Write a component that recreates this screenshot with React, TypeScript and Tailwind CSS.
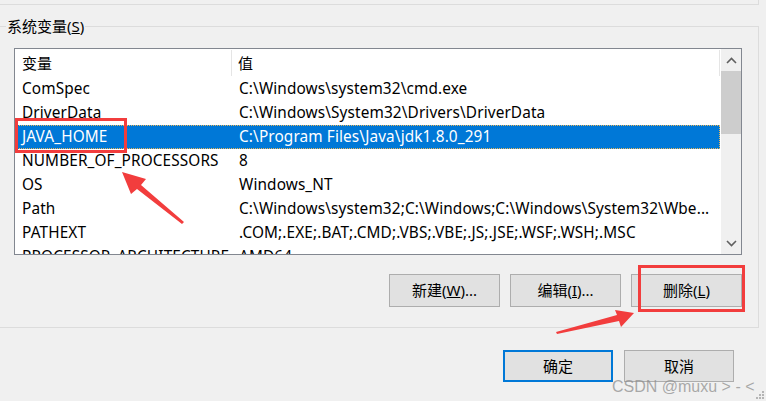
import React from "react";

const rows: [string, string][] = [
  ["ComSpec", "C:\\Windows\\system32\\cmd.exe"],
  ["DriverData", "C:\\Windows\\System32\\Drivers\\DriverData"],
  ["JAVA_HOME", "C:\\Program Files\\Java\\jdk1.8.0_291"],
  ["NUMBER_OF_PROCESSORS", "8"],
  ["OS", "Windows_NT"],
  ["Path", "C:\\Windows\\system32;C:\\Windows;C:\\Windows\\System32\\Wbe..."],
  ["PATHEXT", ".COM;.EXE;.BAT;.CMD;.VBS;.VBE;.JS;.JSE;.WSF;.WSH;.MSC"],
  ["PROCESSOR_ARCHITECTURE", "AMD64"],
];

function Btn({ children }: { children: React.ReactNode }) {
  return (
    <div className="flex items-center justify-center w-[111px] h-[33px] bg-[#e1e1e1] text-[15px] text-black border border-[#adadad]">
      {children}
    </div>
  );
}

export default function App() {
  return (
    <div
      className="relative w-[766px] h-[401px] overflow-hidden bg-[#f0f0f0] text-black"
      style={{ fontFamily: '"Noto Sans", "Noto Sans CJK SC", sans-serif' }}
    >
      {/* previous group box remnant */}
      <div className="w-[759px] h-[5px] border-r border-b border-[#dcdcdc]" />

      {/* system variables group */}
      <div className="mt-[15px] w-[759px] flex flex-col">
        <div className="flex items-center h-[13px]">
          <div className="w-[6px] h-px bg-[#dcdcdc]" />
          <div className="px-px text-[15px] leading-[13px] text-black">
            系统变量(<u>S</u>)
          </div>
          <div className="flex-1 h-px bg-[#dcdcdc] self-center" />
          <div className="w-px h-[7px] bg-[#dcdcdc] self-end" />
        </div>
        <div className="border-r border-b border-[#dcdcdc] h-[295px] flex flex-col pl-[14px] pr-[16px] pt-[15px]">
          {/* list view */}
          <div className="w-[728px] h-[207px] border border-[#828790] bg-white flex overflow-hidden">
            <div className="w-[705px] flex flex-col overflow-hidden">
              <div className="h-[28px] shrink-0 flex text-[15px]">
                <div className="w-[217px] pl-[7px] flex items-center border-r border-[#e5e5e5] my-px">变量</div>
                <div className="flex-1 pl-[6px] flex items-center border-r border-[#e5e5e5] my-px">值</div>
              </div>
              {rows.map(([k, v]) => {
                const sel = k === "JAVA_HOME";
                return (
                  <div
                    key={k}
                    className={
                      "h-[24px] shrink-0 flex items-center text-[15.35px] tracking-[0.12px] whitespace-nowrap " +
                      (sel ? "bg-[#0078d7] text-white outline outline-1 outline-dotted outline-[#e8b55a] -outline-offset-1" : "")
                    }
                  >
                    <div className="w-[217px] pl-[7px] overflow-hidden">{k}</div>
                    <div className="flex-1 pl-[7px] overflow-hidden">{v}</div>
                  </div>
                );
              })}
            </div>
            {/* scrollbar */}
            <div className="w-[21px] bg-[#f0f0f0] flex flex-col border-l border-white">
              <div className="h-[22px] flex items-center justify-center">
                <svg width="11" height="7" viewBox="0 0 11 7">
                  <path d="M1 6 L5.5 1.5 L10 6" fill="none" stroke="#606060" strokeWidth="1.6" />
                </svg>
              </div>
              <div className="h-[63px] bg-[#cdcdcd]" />
              <div className="flex-1" />
              <div className="h-[22px] flex items-center justify-center">
                <svg width="11" height="7" viewBox="0 0 11 7">
                  <path d="M1 1 L5.5 5.5 L10 1" fill="none" stroke="#606060" strokeWidth="1.6" />
                </svg>
              </div>
            </div>
          </div>
          {/* buttons */}
          <div className="mt-[19px] flex justify-end gap-[10px] w-[728px]">
            <Btn>
              新建(<u>W</u>)...
            </Btn>
            <Btn>
              编辑(<u>I</u>)...
            </Btn>
            <Btn>
              删除(<u>L</u>)
            </Btn>
          </div>
        </div>
      </div>

      {/* dialog buttons */}
      <div className="mt-[22px] flex gap-[11px] pl-[503px]">
        <div className="flex items-center justify-center w-[110px] h-[32px] bg-[#e1e1e1] text-[15px] border-2 border-[#0078d7]">
          确定
        </div>
        <div className="flex items-center justify-center w-[110px] h-[32px] bg-[#e1e1e1] text-[15px] border border-[#adadad]">
          取消
        </div>
      </div>

      {/* annotations */}
      <div className="absolute left-[15px] top-[118px] w-[112px] h-[35px] border-[3px] border-[#f23d3d]" />
      <div className="absolute left-[638px] top-[265px] w-[107px] h-[47px] border-[3px] border-[#f23d3d]" />
      <svg className="absolute left-0 top-0" width="766" height="401" viewBox="0 0 766 401">
        <polygon points="122,172 146,179 141,185 184,222 182,224 137,189 131,194" fill="#f23d3d" />
        <polygon points="634,313 621,327 619,321 557,334 556,332 617,315 615,310" fill="#f23d3d" />
      </svg>

      {/* watermark */}
      <div
        className="absolute left-[612px] top-[375px] text-[16px] text-[#8f8f8f]/75 whitespace-nowrap"
        style={{ fontFamily: '"Liberation Sans", sans-serif' }}
      >
        CSDN @muxu &gt; - &lt;
      </div>
      {/* size grip */}
      <div className="absolute right-[2px] bottom-[2px] grid grid-cols-3 gap-px">
        <div className="w-[2px] h-[2px]" />
        <div className="w-[2px] h-[2px]" />
        <div className="w-[2px] h-[2px] bg-[#b5b5b5]" />
        <div className="w-[2px] h-[2px]" />
        <div className="w-[2px] h-[2px] bg-[#b5b5b5]" />
        <div className="w-[2px] h-[2px] bg-[#b5b5b5]" />
        <div className="w-[2px] h-[2px] bg-[#b5b5b5]" />
        <div className="w-[2px] h-[2px] bg-[#b5b5b5]" />
        <div className="w-[2px] h-[2px] bg-[#b5b5b5]" />
      </div>
    </div>
  );
}
